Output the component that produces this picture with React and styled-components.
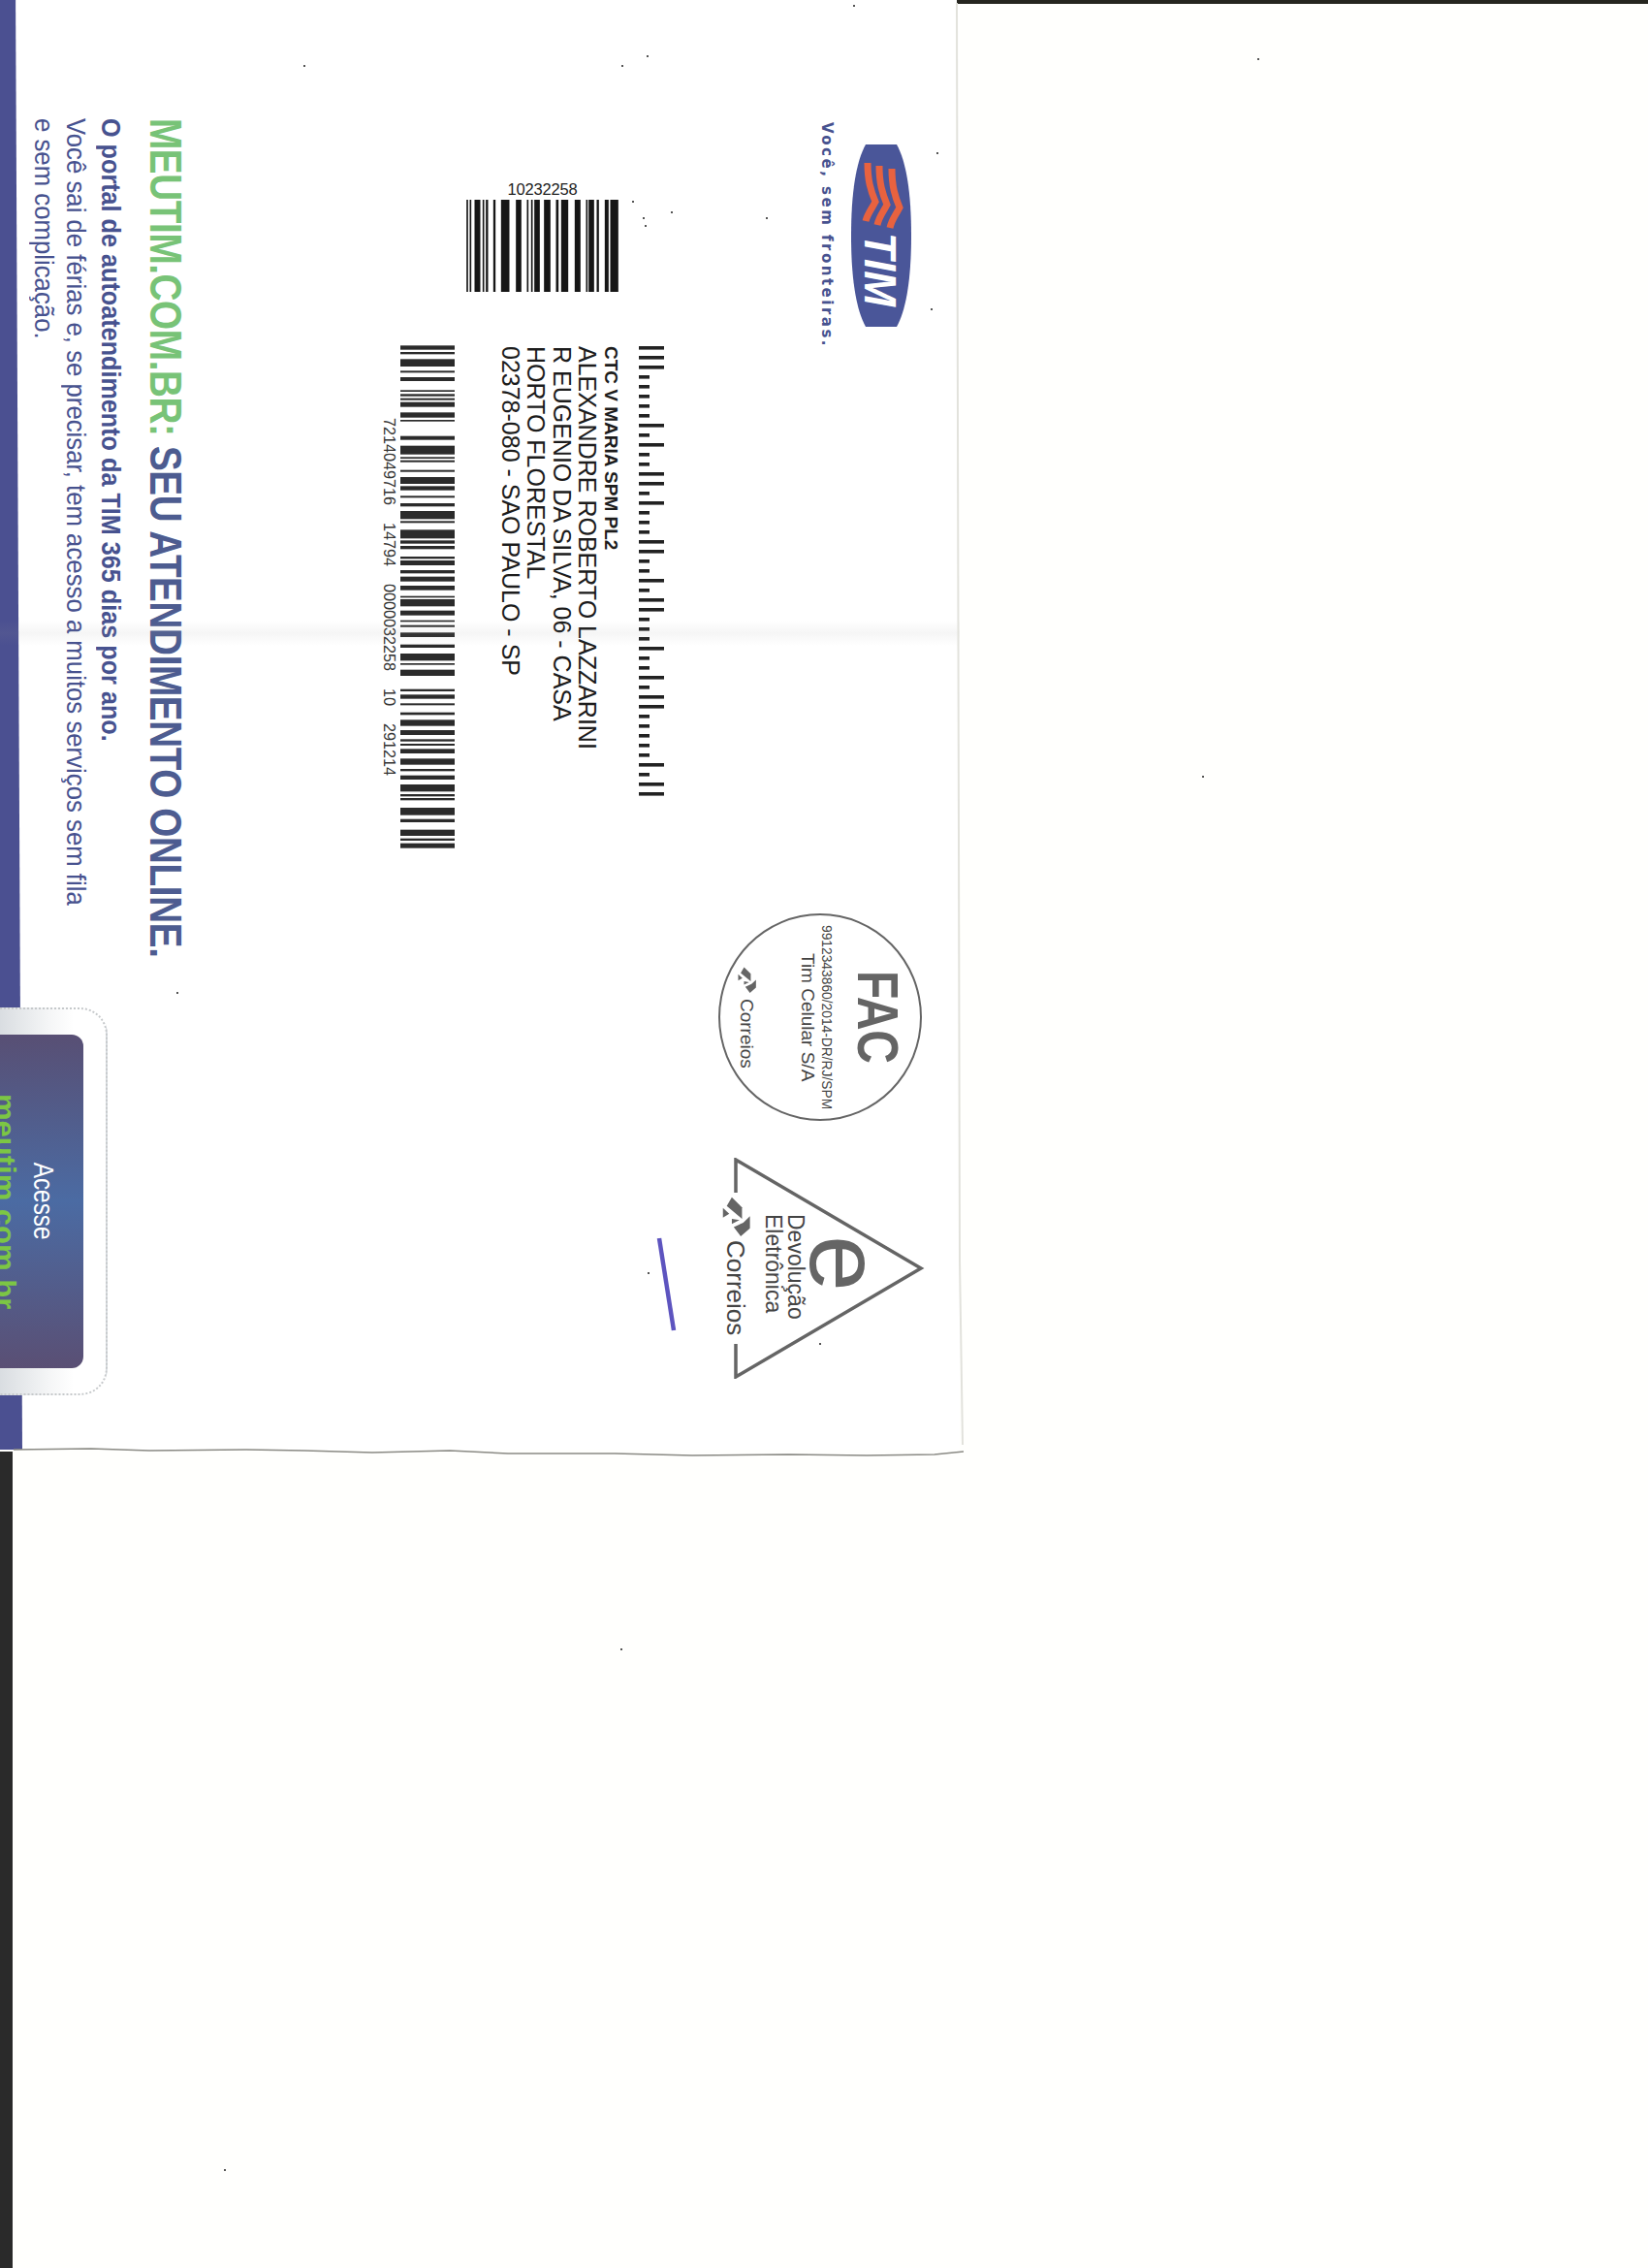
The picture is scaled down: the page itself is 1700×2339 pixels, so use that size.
import styled, { createGlobalStyle } from "styled-components";

const NARROW = `"Liberation Sans Narrow", "Liberation Sans", sans-serif`;
const ARIAL = `"Liberation Sans", Arial, sans-serif`;
const NAVY = "#47528f";
const GREEN = "#78c377";
const STAMP = "#656565";

// barcode bars read off the scan: [start, end] in thirds of a pixel
const TOP_BARS = [
    [0, 5], [10, 15], [25, 43], [50, 55], [60, 67], [83, 90], [107, 133], [153, 170],
    [187, 192], [200, 205], [210, 227], [240, 260], [277, 285], [293, 315], [335, 353],
    [370, 375], [378, 395], [403, 410], [428, 440], [445, 470],
];
const WIDE_BARS = [
    [1, 14], [21, 28], [43, 66], [79, 85], [99, 111], [139, 144], [151, 158], [164, 170],
    [176, 191], [208, 224], [231, 236], [281, 293], [311, 338], [346, 351], [356, 362],
    [386, 392], [408, 429], [436, 449], [466, 472], [489, 499], [513, 538], [544, 550],
    [571, 598], [604, 614], [621, 631], [654, 661], [666, 681], [696, 706], [716, 731],
    [744, 758], [776, 781], [786, 808], [821, 836], [851, 856], [866, 872], [889, 903],
    [926, 936], [954, 976], [984, 989], [1004, 1023], [1064, 1071], [1081, 1094],
    [1108, 1114], [1136, 1144], [1159, 1178], [1191, 1206], [1219, 1226], [1233, 1239],
    [1249, 1263], [1279, 1298], [1311, 1318], [1331, 1344], [1359, 1381], [1389, 1396],
    [1401, 1408], [1431, 1454], [1466, 1476], [1499, 1518], [1526, 1533], [1541, 1556],
];
const POSTNET = "TTTsssssTsTssTTsTsssTTssTsTTsssTssTsTTsssssTsTT";
const SPECKS = [
    [667, 57], [641, 67], [1297, 60], [231, 2237], [966, 157], [790, 224], [663, 224],
    [668, 1312], [880, 5], [313, 67], [652, 207], [665, 232], [692, 218], [960, 318],
    [182, 1023], [845, 1385], [1240, 800], [640, 1700],
];

function CorreiosMark({ size }) {
    return (
        <svg width={size * 0.7} height={size} viewBox="0 0 87 125">
            <path d="M30 2l32 32v36L14 30z" fill={STAMP} />
            <path d="M2 36l20 18L2 66z" fill={STAMP} />
            <path d="M87 62v38l-29 25-22-29 30-14z" fill={STAMP} />
            <path d="M30 86V70l24 4z" fill={STAMP} />
        </svg>
    );
}

export default function App() {
    return (
        <Page>
            <GlobalStyle />
            <Envelope>
                <Stripe />

                <Promo>
                    <PromoTitle>
                        <b>MEUTIM.COM.BR:</b> SEU ATENDIMENTO ONLINE.
                    </PromoTitle>
                    <PromoLead>O portal de autoatendimento da TIM 365 dias por ano.</PromoLead>
                    <PromoBody>Você sai de férias e, se precisar, tem acesso a muitos serviços sem fila</PromoBody>
                    <PromoBody>e sem complicação.</PromoBody>
                </Promo>

                <MailColumn>
                    <TrackingBlock>
                        <TrackingLabel>10232258</TrackingLabel>
                        <svg width="157" height="95" viewBox="0 0 470 285">
                            {TOP_BARS.map(([a, b]) => (
                                <rect key={a} x={a} y="0" width={b - a} height="285" fill="#161616" />
                            ))}
                        </svg>
                    </TrackingBlock>

                    <AddressRow>
                        <WideCode>
                            <WideCaption>7214049716    14794    0000032258    10    291214</WideCaption>
                            <svg width="56" height="519" viewBox="0 0 56 1557" preserveAspectRatio="none">
                                {WIDE_BARS.map(([a, b]) => (
                                    <rect key={a} x="0" y={a} width="56" height={b - a} fill="#2b2b2b" />
                                ))}
                            </svg>
                        </WideCode>
                        <Address>
                            <AddressLine $bold>CTC V MARIA SPM PL2</AddressLine>
                            <AddressLine>ALEXANDRE ROBERTO LAZZARINI</AddressLine>
                            <AddressLine>R EUGENIO DA SILVA, 06 - CASA</AddressLine>
                            <AddressLine>HORTO FLORESTAL</AddressLine>
                            <AddressLine>02378-080 - SAO PAULO - SP</AddressLine>
                        </Address>
                        <svg width="27" height="470" viewBox="0 0 27 470">
                            {POSTNET.split("").map((kind, i) => (
                                <rect
                                    key={i}
                                    x="0"
                                    y={i * 10 + 1}
                                    width={kind === "T" ? 26 : 11}
                                    height="3.6"
                                    fill="#222"
                                />
                            ))}
                        </svg>
                    </AddressRow>
                </MailColumn>

                <MarkColumn>
                    <Brand>
                        <Slogan>Você, sem fronteiras.</Slogan>
                        <svg width="64" height="190" viewBox="0 0 64 190">
                            <path d="M16 1h32c10 18 15 50 15 94s-5 76-15 94H16C6 171 1 139 1 95S6 19 16 1z" fill="#4a5699" />
                            <g fill="none" stroke="#e8623f" strokeWidth="7">
                                <path d="M18 20c0 18 3 28 8 40-4 8-8 12-10 20" />
                                <path d="M30 23c0 18 3 28 8 40-4 8-8 12-10 21" />
                                <path d="M43 26c0 18 3 28 8 40-4 8-8 12-10 21" />
                            </g>
                            <text
                                transform="translate(15 92) rotate(90)"
                                fontFamily={ARIAL}
                                fontSize="46"
                                fontWeight="700"
                                fontStyle="italic"
                                fill="#fff"
                                textLength="76"
                                lengthAdjust="spacingAndGlyphs"
                            >
                                TIM
                            </text>
                        </svg>
                    </Brand>

                    <FacStamp>
                        <StampMark>
                            <CorreiosMark size={27} />
                            <StampText $size={19}>Correios</StampText>
                        </StampMark>
                        <FacHolder>
                            <StampText $size={19}>Tim Celular S/A</StampText>
                        </FacHolder>
                        <StampText $size={13.8}>9912343860/2014-DR/RJ/SPM</StampText>
                        <FacTitle>FAC</FacTitle>
                    </FacStamp>

                    <ReturnStamp>
                        <TriangleOutline width="200" height="228" viewBox="0 0 200 228">
                            <polyline
                                points="5,36 5,2 196,114 5,226 5,192"
                                fill="none"
                                stroke={STAMP}
                                strokeWidth="3.5"
                            />
                        </TriangleOutline>
                        <ReturnMark>
                            <CorreiosMark size={41} />
                            <StampText $size={26}>Correios</StampText>
                        </ReturnMark>
                        <ReturnLabel>
                            <StampText $size={23}>Devolução</StampText>
                            <StampText $size={23}>Eletrônica</StampText>
                        </ReturnLabel>
                        <BigE>e</BigE>
                    </ReturnStamp>
                </MarkColumn>

                <WindowCard>
                    <WindowPanel>
                        <WindowText>Acesse</WindowText>
                        <WindowUrl>meutim.com.br</WindowUrl>
                    </WindowPanel>
                </WindowCard>
            </Envelope>

            <Crease />
            <TopShadow />
            <BottomBar />

            <ScanMarks width="1700" height="2339" viewBox="0 0 1700 2339">
                <path d="M987 3L990 1300L993 1490" fill="none" stroke="#e2e2dc" strokeWidth="2" />
                <path
                    d="M14 1495l80-1 60 2 100-1 60 1 70 2 80-2 60 3 110 0 80 2 100-1 80 1 70-1 30-3"
                    fill="none"
                    stroke="#8a8a84"
                    strokeWidth="1.6"
                />
                <line x1="680" y1="1277" x2="695" y2="1372" stroke="#5d54bf" strokeWidth="4.5" />
                {SPECKS.map(([x, y]) => (
                    <rect key={x + y} x={x} y={y} width="2" height="2" fill="#555" />
                ))}
            </ScanMarks>
        </Page>
    );
}

const GlobalStyle = createGlobalStyle`
    html, body {
        margin : 0;
        background : #fffffd;
    }
`;

const Page = styled.div`
    position : relative;
    width : 1700px;
    height : 2339px;
    overflow : hidden;
    background : #fffffd;
`;

const Envelope = styled.div`
    position : relative;
    display : flex;
    align-items : flex-start;
    width : 990px;
    height : 1495px;
    background : #fff;
`;

const Stripe = styled.div`
    flex : none;
    width : 23px;
    height : 100%;
    background : #4b5091;
    clip-path : polygon(0 0, 70% 0, 100% 100%, 0 100%);
`;

const Promo = styled.div`
    flex : none;
    writing-mode : vertical-rl;
    margin : 122px 0 0 6px;
    font-family : ${NARROW};
    white-space : nowrap;
`;

const PromoTitle = styled.div`
    font-size : 46px;
    line-height : 50px;
    font-weight : 700;
    color : #4d5c90;
    letter-spacing : -0.5px;
    margin-left : 13px;
    transform-origin : top;
    transform : scaleY(0.842);

    b {
        color : ${GREEN};
    }
`;

const PromoLead = styled.div`
    font-size : 28px;
    line-height : 38px;
    font-weight : 700;
    color : ${NAVY};
    transform-origin : top;
    transform : scaleY(0.9);
`;

const PromoBody = styled.div`
    font-size : 28px;
    line-height : 33px;
    color : ${NAVY};
    transform-origin : top;
    transform : scaleY(0.92);
`;

const MailColumn = styled.div`
    flex : none;
    display : flex;
    flex-direction : column;
    margin : 186px 0 0 198px;
`;

const TrackingBlock = styled.div`
    display : flex;
    flex-direction : column;
    align-items : center;
    align-self : flex-start;
    gap : 2px;
    margin-left : 87px;
`;

const TrackingLabel = styled.div`
    font-family : ${ARIAL};
    font-size : 16.5px;
    line-height : 18px;
    letter-spacing : -0.2px;
    color : #222;
`;

const AddressRow = styled.div`
    display : flex;
    align-items : flex-start;
    margin-top : 55px;
`;

const WideCode = styled.div`
    display : flex;
    gap : 3px;
`;

const WideCaption = styled.div`
    writing-mode : vertical-rl;
    margin-top : 75px;
    font-family : ${ARIAL};
    font-size : 16.2px;
    line-height : 16px;
    white-space : pre;
    color : #333;
`;

const Address = styled.div`
    writing-mode : vertical-rl;
    margin : 1px 0 0 44px;
    padding-right : 18px;
    color : #1c1c1c;
    white-space : nowrap;
`;

const AddressLine = styled.div`
    font-family : ${ARIAL};
    font-size : ${(p) => (p.$bold ? "19px" : "25px")};
    font-weight : ${(p) => (p.$bold ? 700 : 400)};
    line-height : ${(p) => (p.$bold ? "22px" : "26.5px")};
`;

const MarkColumn = styled.div`
    flex : none;
    display : flex;
    flex-direction : column;
    align-items : flex-start;
    margin : 128px 0 0 55px;
`;

const Brand = styled.div`
    display : flex;
    align-items : center;
    gap : 16px;
    margin-left : 104px;
    height : 230px;
`;

const Slogan = styled.div`
    writing-mode : vertical-rl;
    font-family : "DejaVu Sans", sans-serif;
    font-size : 15px;
    line-height : 16px;
    font-weight : 700;
    letter-spacing : 2.5px;
    white-space : nowrap;
    color : ${NAVY};
`;

const FacStamp = styled.div`
    display : flex;
    align-items : center;
    box-sizing : border-box;
    width : 210px;
    height : 214px;
    margin-top : 584px;
    padding-left : 18px;
    border : 2.5px solid ${STAMP};
    border-radius : 50%;
`;

const StampMark = styled.div`
    display : flex;
    flex-direction : column;
    align-items : center;
    gap : 6px;
`;

const FacHolder = styled.div`
    margin : 0 2px 0 44px;
`;

const StampText = styled.div`
    writing-mode : vertical-rl;
    font-family : ${ARIAL};
    font-size : ${(p) => p.$size}px;
    line-height : ${(p) => p.$size}px;
    white-space : nowrap;
    color : #444;
`;

const FacTitle = styled.div`
    writing-mode : vertical-rl;
    margin-left : 23px;
    font-family : ${NARROW};
    font-size : 60px;
    line-height : 46px;
    font-weight : 700;
    color : ${STAMP};
    transform : scaleY(0.8);
`;

const ReturnStamp = styled.div`
    position : relative;
    display : flex;
    align-items : flex-start;
    width : 200px;
    height : 228px;
    margin-top : 38px;
    margin-left : 13px;
    padding-top : 40px;
    box-sizing : border-box;
`;

const TriangleOutline = styled.svg`
    position : absolute;
    left : 0;
    top : 0;
`;

const ReturnMark = styled.div`
    display : flex;
    flex-direction : column;
    align-items : center;
    gap : 4px;
    margin-left : -9px;
`;

const ReturnLabel = styled.div`
    display : flex;
    flex-direction : row-reverse;
    margin : 18px 0 0 12px;
`;

const BigE = styled.div`
    writing-mode : vertical-rl;
    margin : 40px 0 0 5px;
    font-family : ${ARIAL};
    font-size : 104px;
    line-height : 70px;
    color : ${STAMP};
`;

const WindowCard = styled.div`
    position : absolute;
    left : 0;
    top : 1039px;
    display : flex;
    align-items : center;
    box-sizing : border-box;
    width : 111px;
    height : 400px;
    border : 2px dotted #c6c9cb;
    border-left : 0;
    border-radius : 0 28px 28px 0;
    background : linear-gradient(90deg, #d9dde1 0%, #f4f5f6 45%, #fff 70%);
`;

const WindowPanel = styled.div`
    writing-mode : vertical-rl;
    box-sizing : border-box;
    width : 86px;
    height : 344px;
    padding-right : 26px;
    overflow : hidden;
    border-radius : 0 12px 12px 0;
    background : linear-gradient(180deg, #584f74 0%, #4b6ba3 50%, #5a4f74 100%);
    text-align : center;
    white-space : nowrap;
`;

const WindowText = styled.div`
    font-family : ${NARROW};
    font-size : 29px;
    line-height : 30px;
    color : #fff;
    transform : scaleY(0.84);
`;

const WindowUrl = styled.div`
    font-family : ${NARROW};
    font-size : 31px;
    line-height : 52px;
    font-weight : 700;
    color : #7cc644;
`;

const Crease = styled.div`
    position : absolute;
    left : 0;
    top : 640px;
    width : 990px;
    height : 26px;
    background : linear-gradient(180deg, transparent, rgba(150, 150, 150, 0.09) 50%, transparent);
    pointer-events : none;
`;

const TopShadow = styled.div`
    position : absolute;
    left : 987px;
    top : 0;
    width : 713px;
    height : 4px;
    background : #26261f;
`;

const BottomBar = styled.div`
    position : absolute;
    left : 0;
    top : 1497px;
    width : 13px;
    height : 842px;
    background : #2a2a2a;
`;

const ScanMarks = styled.svg`
    position : absolute;
    left : 0;
    top : 0;
    pointer-events : none;
`;
